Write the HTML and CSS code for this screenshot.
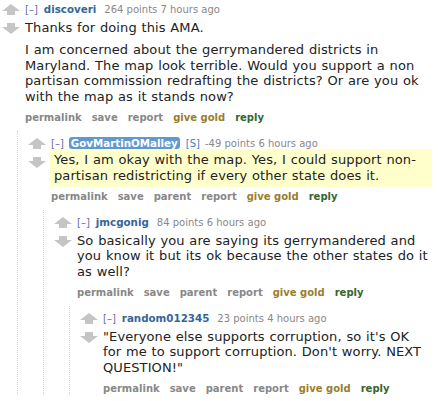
FILE: index.html
```html
<!DOCTYPE html>
<html lang="en">
<head>
<meta charset="utf-8">
<title>Comments</title>
<link rel="stylesheet" href="styles.css">
</head>
<body>
<div class="comment">
  <div class="midcol">
    <svg class="arrow" viewBox="0 0 18 11" width="18" height="11"><polygon points="9,0 18,7 13,7 13,11 5,11 5,7 0,7"/></svg>
    <svg class="arrow down" viewBox="0 0 18 11" width="18" height="11"><polygon points="9,11 18,4 13,4 13,0 5,0 5,4 0,4"/></svg>
  </div>
  <div class="entry">
    <p class="tagline"><span class="expand">[–]</span><a class="author">discoveri</a><span class="score">264 points</span> 7 hours ago</p>
    <div class="md">
      <p>Thanks for doing this AMA.</p>
      <p>I am concerned about the gerrymandered districts in Maryland. The map look terrible. Would you support a non partisan commission redrafting the districts? Or are you ok with the map as it stands now?</p>
    </div>
    <ul class="buttons">
      <li>permalink</li><li>save</li><li>report</li><li class="gold">give gold</li><li class="reply">reply</li>
    </ul>
  </div>
</div>
<div class="child">
  <div class="comment">
    <div class="midcol">
      <svg class="arrow" viewBox="0 0 18 11" width="18" height="11"><polygon points="9,0 18,7 13,7 13,11 5,11 5,7 0,7"/></svg>
      <svg class="arrow down" viewBox="0 0 18 11" width="18" height="11"><polygon points="9,11 18,4 13,4 13,0 5,0 5,4 0,4"/></svg>
    </div>
    <div class="entry">
      <p class="tagline"><span class="expand">[–]</span><a class="author submitter">GovMartinOMalley</a><span class="flag">[S]</span><span class="score">-49 points</span> 6 hours ago</p>
      <div class="md special">
        <p>Yes, I am okay with the map. Yes, I could support non-partisan redistricting if every other state does it.</p>
      </div>
      <ul class="buttons">
        <li>permalink</li><li>save</li><li>parent</li><li>report</li><li class="gold">give gold</li><li class="reply">reply</li>
      </ul>
    </div>
  </div>
  <div class="child">
    <div class="comment">
      <div class="midcol">
        <svg class="arrow" viewBox="0 0 18 11" width="18" height="11"><polygon points="9,0 18,7 13,7 13,11 5,11 5,7 0,7"/></svg>
        <svg class="arrow down" viewBox="0 0 18 11" width="18" height="11"><polygon points="9,11 18,4 13,4 13,0 5,0 5,4 0,4"/></svg>
      </div>
      <div class="entry">
        <p class="tagline"><span class="expand">[–]</span><a class="author">jmcgonig</a><span class="score">84 points</span> 6 hours ago</p>
        <div class="md">
          <p>So basically you are saying its gerrymandered and you know it but its ok because the other states do it as well?</p>
        </div>
        <ul class="buttons">
          <li>permalink</li><li>save</li><li>parent</li><li>report</li><li class="gold">give gold</li><li class="reply">reply</li>
        </ul>
      </div>
    </div>
    <div class="child">
      <div class="comment">
        <div class="midcol">
          <svg class="arrow" viewBox="0 0 18 11" width="18" height="11"><polygon points="9,0 18,7 13,7 13,11 5,11 5,7 0,7"/></svg>
          <svg class="arrow down" viewBox="0 0 18 11" width="18" height="11"><polygon points="9,11 18,4 13,4 13,0 5,0 5,4 0,4"/></svg>
        </div>
        <div class="entry">
          <p class="tagline"><span class="expand">[–]</span><a class="author">random012345</a><span class="score">23 points</span> 4 hours ago</p>
          <div class="md">
            <p>"Everyone else supports corruption, so it's OK for me to support corruption. Don't worry. NEXT QUESTION!"</p>
          </div>
          <ul class="buttons">
            <li>permalink</li><li>save</li><li>parent</li><li>report</li><li class="gold">give gold</li><li class="reply">reply</li>
          </ul>
        </div>
      </div>
    </div>
  </div>
</div>
</body>
</html>
```
FILE: styles.css
```css
html, body {
  background: #ffffff;
}
body {
  margin: 0;
  padding: 3px 7px 0 0;
  font-family: "DejaVu Sans", Verdana, sans-serif;
  color: #222222;
  overflow: hidden;
}
.comment {
  display: flex;
}
.midcol {
  flex: none;
  width: 25px;
  box-sizing: border-box;
  padding: 1px 0 0 2px;
  display: flex;
  flex-direction: column;
}
.arrow {
  display: block;
  fill: #c5c5c5;
}
.arrow.down {
  margin-top: 8px;
}
.entry {
  flex: 1;
  min-width: 0;
}
.tagline {
  margin: 0;
  height: 12px;
  font-size: 10px;
  line-height: 12px;
  color: #888888;
  white-space: nowrap;
}
.expand {
  color: #6b6ba8;
}
.author {
  font-weight: bold;
  font-size: 10.3px;
  color: #336699;
  margin: 0 8px 0 6px;
}
.author.submitter {
  background: #5f99cf;
  color: #ffffff;
  border-radius: 3px;
  padding: 0 2px;
  margin: 0 6px 0 5px;
}
.flag {
  color: #3f7fc4;
  margin-right: 5px;
}
.md {
  margin-top: 5px;
  font-size: 13px;
  line-height: 15.5px;
  color: #222222;
  word-spacing: 0.5px;
  letter-spacing: 0.1px;
}
.md p {
  margin: 0 0 6.5px;
}
.md.special {
  margin-top: 0.5px;
  margin-left: -1px;
  margin-bottom: 2.5px;
  padding: 3px 4px 4px;
  background: #ffffcc;
}
.md.special p {
  margin: 0;
}
.buttons {
  list-style: none;
  margin: 0;
  padding: 1px 0 0;
  display: flex;
  gap: 10px;
  font-size: 10px;
  line-height: 12px;
  font-weight: bold;
  color: #888888;
}
.buttons .gold {
  color: #9a7d2e;
}
.buttons .reply {
  color: #336633;
}
.child {
  margin: 7px 0 0 17px;
  padding: 6px 0 0 8px;
  border-left: 1px dotted #d0d0ea;
}
```
